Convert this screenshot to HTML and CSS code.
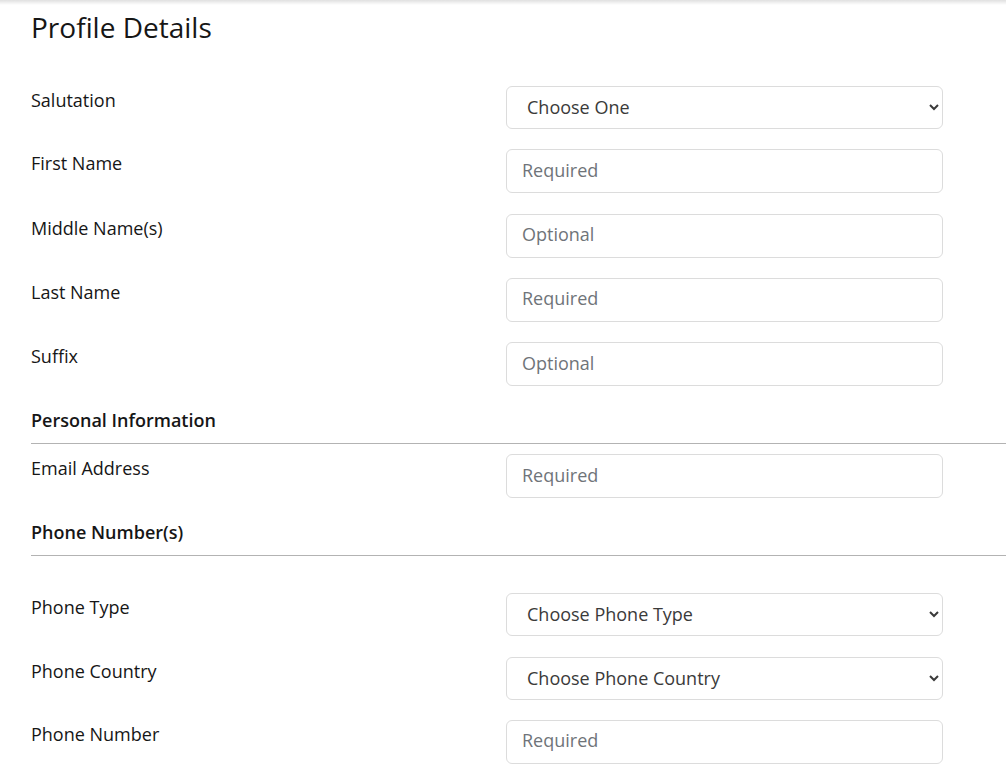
FILE: index.html
```html
<!DOCTYPE html>
<html>
<head>
    <title>Profile Details</title>
    <link rel="stylesheet" href="styles.css">
</head>
<body>
    <div class="container">
        <h1 class="page-title">Profile Details</h1>
        <form class="profile-form">
            <div class="form-row">
                <label for="salutation">Salutation</label>
                <select class="form-select" id="salutation">
                    <option>Choose One</option>
                    <option>Mr.</option>
                    <option>Ms.</option>
                    <option>Dr.</option>
                </select>
            </div>
            <div class="form-row">
                <label for="first-name">First Name</label>
                <input class="form-input" id="first-name" type="text" placeholder="Required">
            </div>
            <div class="form-row">
                <label for="middle-name">Middle Name(s)</label>
                <input class="form-input" id="middle-name" type="text" placeholder="Optional">
            </div>
            <div class="form-row">
                <label for="last-name">Last Name</label>
                <input class="form-input" id="last-name" type="text" placeholder="Required">
            </div>
            <div class="form-row">
                <label for="suffix">Suffix</label>
                <input class="form-input" id="suffix" type="text" placeholder="Optional">
            </div>

            <h2 class="section-title">Personal Information</h2>
            <div class="form-row">
                <label for="email">Email Address</label>
                <input class="form-input" id="email" type="email" placeholder="Required">
            </div>

            <h2 class="section-title section-title-spaced">Phone Number(s)</h2>
            <div class="form-row">
                <label for="phone-type">Phone Type</label>
                <select class="form-select" id="phone-type">
                    <option>Choose Phone Type</option>
                    <option>Mobile</option>
                    <option>Home</option>
                    <option>Work</option>
                </select>
            </div>
            <div class="form-row">
                <label for="phone-country">Phone Country</label>
                <select class="form-select" id="phone-country">
                    <option>Choose Phone Country</option>
                </select>
            </div>
            <div class="form-row">
                <label for="phone-number">Phone Number</label>
                <input class="form-input" id="phone-number" type="tel" placeholder="Required">
            </div>
        </form>
    </div>
</body>
</html>
```

FILE: styles.css
```css
body {
    margin: 0;
    background: #fff linear-gradient(to bottom, rgba(0, 0, 0, 0.12), rgba(0, 0, 0, 0)) no-repeat;
    background-size: 100% 5px;
    font-family: "Open Sans", Lato, Arial, sans-serif;
    color: #161616;
}

.container {
    padding: 0 0 0 31px;
}

.page-title {
    margin: 0;
    padding-top: 10px;
    font-size: 28px;
    font-weight: 400;
    line-height: 34px;
}

.profile-form {
    padding-top: 42px;
}

.form-row {
    display: grid;
    grid-template-columns: 475px 437px;
    margin-bottom: 20.33px;
}

.form-row label {
    padding-top: 3px;
    font-size: 18px;
    line-height: 22px;
}

.form-input,
.form-select {
    box-sizing: border-box;
    width: 437px;
    height: 44px;
    border: 1px solid #dcdcdc;
    border-radius: 6px;
    background-color: #fff;
    font-family: inherit;
    font-size: 18px;
    outline: none;
}

.form-input {
    padding: 0 15px 3px;
    color: #333;
}

.form-input::placeholder {
    color: #6f7479;
}

.form-select {
    height: 43px;
    padding: 0 16px 1px;
    color: #3a3a3a;
}

.section-title {
    margin: 23px 0 10px;
    padding-bottom: 12px;
    border-bottom: 1px solid #b3b3b3;
    font-size: 18px;
    font-weight: 600;
    line-height: 22px;
}

.section-title-spaced {
    margin-bottom: 37px;
}
```
